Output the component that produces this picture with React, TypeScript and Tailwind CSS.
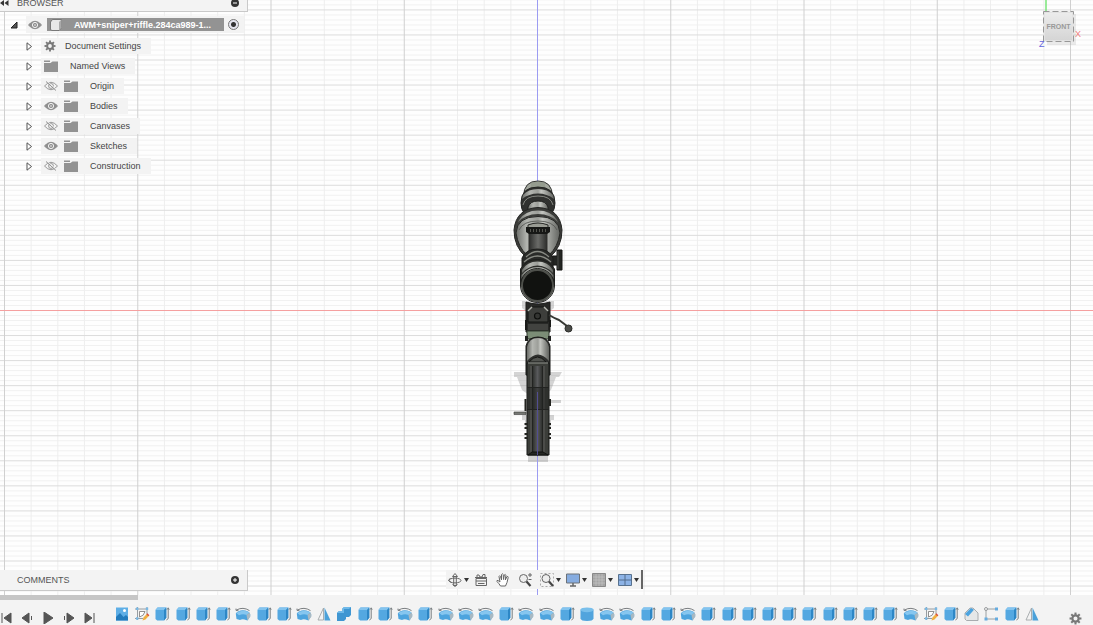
import React from 'react';
import clsx from 'clsx';

type Feature = 'image' | 'sketch' | 'extrude' | 'revolve' | 'mirror' | 'combine' | 'cylinder' | 'chamfer' | 'points';

interface TreeItem {
  label: string;
  icon: 'gear' | 'folder';
  visible?: boolean;
}

const treeItems: TreeItem[] = [
  { label: 'Document Settings', icon: 'gear' },
  { label: 'Named Views', icon: 'folder' },
  { label: 'Origin', icon: 'folder', visible: false },
  { label: 'Bodies', icon: 'folder', visible: true },
  { label: 'Canvases', icon: 'folder', visible: false },
  { label: 'Sketches', icon: 'folder', visible: true },
  { label: 'Construction', icon: 'folder', visible: false },
];

// e = extrude, r = revolve, m = mirror, j = combine, y = cylinder ...
const codes: Record<string, Feature> = {
  i: 'image',
  s: 'sketch',
  e: 'extrude',
  r: 'revolve',
  m: 'mirror',
  j: 'combine',
  y: 'cylinder',
  c: 'chamfer',
  p: 'points',
};

const timeline = 'iseeeereermjeererrrerreyrreereeeeeeeeeersecpem'.split('').map((c) => codes[c]);

const Gear = ({ size }: { size: number }) => (
  <svg width={size} height={size} viewBox="0 0 14 14" fill="none" stroke="#777">
    <circle cx="7" cy="7" r="3.4" strokeWidth="2.4" />
    {[0, 45, 90, 135, 180, 225, 270, 315].map((a) => (
      <path key={a} d="M7 0.6V3" strokeWidth="2.2" transform={`rotate(${a} 7 7)`} />
    ))}
  </svg>
);

const Folder = () => (
  <svg width="14" height="12" viewBox="0 0 14 12" fill="#929292">
    <path d="M0 0.5h6v1.5H0zM0 3h6.5l2-1.5H14V12H0z" />
  </svg>
);

const Eye = ({ open }: { open: boolean }) => (
  <svg width="14" height="10" viewBox="0 0 14 10" fill="none" stroke="#8f8f8f">
    {open ? (
      <>
        <path d="M0.5 5Q7-2.5 13.5 5Q7 12.5 0.5 5z" fill="#8f8f8f" />
        <circle cx="7" cy="5" r="2.6" fill="#8f8f8f" stroke="#f4f4f4" />
        <circle cx="7" cy="5" r="0.8" fill="#f4f4f4" stroke="none" />
      </>
    ) : (
      <>
        <path d="M0.5 5Q7-2.5 13.5 5Q7 12.5 0.5 5z" strokeWidth="0.9" />
        <circle cx="7" cy="5" r="2.4" strokeWidth="0.9" />
        <path d="M2 0.5L12 9.5" strokeWidth="1" />
        <path d="M3.5 0.5L13 9" stroke="#f2f2f2" strokeWidth="0.8" />
      </>
    )}
  </svg>
);

const FeatureIcon = ({ type }: { type: Feature }) => {
  switch (type) {
    case 'image':
      return (
        <>
          <path d="M2 1.5h12v13H2z" fill="#5daee6" />
          <path d="M2 11l4-4 3.5 4L12 9l2 2v3.5H2z" fill="#217bbd" />
          <circle cx="10.5" cy="4.5" r="1.5" fill="#fff" />
        </>
      );
    case 'sketch':
      return (
        <>
          <path d="M3.5 1v13M1 3h13M13 1v7M1 12.5h8" stroke="#8c9296" strokeWidth="0.9" fill="none" />
          <path d="M5.5 5.5h5.5Q10 10 5.5 11z" stroke="#777" strokeWidth="0.8" fill="#fff" />
          <path d="M2 1.5h2.4v2.4H2zM11.8 1.5h2.4v2.4h-2.4zM2 11.3h2.4v2.4H2z" fill="#79b8e4" />
          <path d="M8.5 14.5l1-3 3.5-3.8 2 2-3.5 3.8z" fill="#f0b040" />
          <path d="M12.4 8.2l1-1 2 2-1 1z" fill="#dc4c3c" />
        </>
      );
    case 'revolve':
      return (
        <>
          <path d="M0.8 7.5Q2 5.5 3.5 5.2Q8 3.4 13 5.5Q16 7.5 15 10.5L12.5 14.5L9.5 13.4Q7 12.7 5 14L1.5 13z" fill="#4da4de" />
          <path d="M1.2 7Q3.5 5 8 4.7Q12 4.8 14.5 6.6L11.5 9Q8 7.6 4 9.2z" fill="#86c6ef" />
          <path d="M12.5 14.5L15.3 10.5Q15.6 8 14.5 6.6L11.5 9z" fill="#a9b9c2" />
          <path d="M1.5 4Q8 0.4 14.5 4.6M1 2.6v1.8h2.4" fill="none" stroke="#6c7174" strokeWidth="0.9" />
        </>
      );
    case 'mirror':
      return (
        <>
          <path d="M7.5 2L2 14h5.5z" fill="#f3f3f3" stroke="#a2a6a8" strokeWidth="0.9" />
          <path d="M8.5 1.5L14.5 14.5h-6z" fill="#4ba1d9" />
        </>
      );
    case 'combine':
      return (
        <>
          <path d="M1 7l2-2h3V3l2-2h7v8l-2 2h-3v2l-2 2H1z" fill="#3f96d2" />
          <path d="M1 7l2-2h3V3l2-2h7l-2 2H8v4z" fill="#6fb9e9" />
        </>
      );
    case 'cylinder':
      return (
        <>
          <path d="M1.5 3.5v9Q2 15 8 15t6.5-2.5v-9z" fill="#51a4dd" />
          <ellipse cx="8" cy="3.8" rx="6.5" ry="2.4" fill="#79bfeb" />
        </>
      );
    case 'chamfer':
      return (
        <>
          <path d="M2 7l5-5h3l5 5v7.5H3.5L2 13z" fill="#e5e7e8" stroke="#a1a5a8" strokeWidth="0.9" />
          <path d="M2 8L8 2l3 1.8-6 6.7z" fill="#4ba3df" />
        </>
      );
    case 'points':
      return (
        <>
          <path d="M3 3h10M3 3v10h10" fill="none" stroke="#92979a" strokeWidth="0.9" />
          <path d="M12 1.5h3v3h-3zM1.5 11.5h3v3h-3zM12 11.5h3v3h-3z" fill="#66ace0" />
          <circle cx="3" cy="3" r="1.5" fill="#f3f3f3" stroke="#85898c" strokeWidth="0.8" />
        </>
      );
    default:
      return (
        <>
          <path d="M1.5 4l2-2.5h8.8v10.2L10 14.6H3.2L1.5 13z" fill="#54a8e1" />
          <path d="M1.5 4l2-2.5h8.8L10 4z" fill="#83c4ef" />
          <path d="M10 4l2.3-2.5v10.2L10 14.6z" fill="#2d87c6" />
          <path d="M14.2 3v9.6l-1.8 1.4M13 3.6l1.2-1.8 1 1.8" fill="none" stroke="#6a7074" strokeWidth="0.9" />
        </>
      );
  }
};

const Grid = () => {
  const rows = Array.from({ length: 119 }, (_, i) => i - 62);
  const cols = Array.from({ length: 42 }, (_, i) => i - 21);
  return (
    <g>
      {rows.filter((n) => n % 5 !== 0).map((n) => (
        <path key={n} d={`M0 ${310.5 + n * 5.01}H1093`} stroke="#f1f1f1" />
      ))}
      {cols.filter((n) => n % 5 !== 0).map((n) => (
        <path key={n} d={`M${537.5 + n * 26.65} 0V595`} stroke="#eeeeee" />
      ))}
      {rows.filter((n) => n % 5 === 0).map((n) => (
        <path key={n} d={`M0 ${310.5 + n * 5.01}H1093`} stroke="#dcdcdc" />
      ))}
      {cols.filter((n) => n % 5 === 0 && n !== 0).map((n) => (
        <path key={n} d={`M${537.5 + n * 26.65} 0V595`} stroke="#d0d0d0" />
      ))}
      <path d="M0 310.5H1093" stroke="#f5a0a0" />
      <path d="M537.5 0V595" stroke="#9c9cf2" />
    </g>
  );
};

const Model = () => (
  <g strokeLinejoin="round">
    <defs>
      <linearGradient id="metal">
        <stop offset="0" stopColor="#6a6c68" />
        <stop offset="0.25" stopColor="#b4b6b1" />
        <stop offset="0.5" stopColor="#9c9e99" />
        <stop offset="0.6" stopColor="#c4c6c1" />
        <stop offset="1" stopColor="#61635f" />
      </linearGradient>
      <linearGradient id="dark">
        <stop offset="0" stopColor="#2d2e2c" />
        <stop offset="0.5" stopColor="#6a6b68" />
        <stop offset="1" stopColor="#2c2d2b" />
      </linearGradient>
      <linearGradient id="stock">
        <stop offset="0" stopColor="#30322f" />
        <stop offset="0.5" stopColor="#595a5c" />
        <stop offset="1" stopColor="#30322f" />
      </linearGradient>
    </defs>

    {/* ground shadow */}
    <g fill="#777" opacity="0.3">
      <path d="M514 372h48l-3 5h-3l-5 13-8 5h-14l-7-5-5-13h-3z" />
      <path d="M522 301h32v7l-4 3h-24l-4-3z" />
      <path d="M549 400h12v3h-12zM522 415h32v5h-3v8h-26v-8h-3zM528 455h20v7h-20z" />
    </g>

    {/* front of the scope */}
    <path d="M523.5 196Q524 181 538 181T552.500 196z" fill="#a2a69d" stroke="#333432" />
    <path d="M531 183q7-3 14 0v7h-14z" fill="#8c9685" opacity="0.6" />
    <path d="M521 203Q521 187 538 187T555 203Q555 209 552 213H524Q521 209 521 203z" fill="#30312f" stroke="#242523" />
    <path d="M523 195Q528 189 538 189T553 195L554 199Q547 193.500 538 193.500T522 199z" fill="url(#metal)" />
    <path d="M523 205Q525 196 538 196T553 205" fill="none" stroke="#858781" strokeWidth="1" />
    <path d="M528 211v-4Q530 201 538 201t10 6v4z" fill="url(#metal)" stroke="#1f201e" />

    {/* bell */}
    <path d="M514 230Q516 208.5 538 207.5Q560 208.5 562 230Q562 247 550 257h-24Q514 247 514 230z" fill="#3b3c39" stroke="#242523" />
    <path d="M519 220Q525 210.5 538 210.5T557 220L558 222.500Q551 214 538 214T518 222.500z" fill="url(#metal)" />
    <path d="M516 233Q517 216.5 538 216.5T560 233Q558 247 549 255h-22Q518 247 516 233z" fill="url(#metal)" stroke="#262725" />
    <path d="M519 230Q523 221 538 221T557 230" fill="none" stroke="#51524e" strokeWidth="0.8" />
    <path d="M529 231h18v22h-18z" fill="url(#dark)" stroke="#30312e" />
    <path d="M528 225q10-4 20 0v3h-20z" fill="#9a9c94" stroke="#292a27" />
    <path d="M526 227h24v5l-3 2h-18l-3-2z" fill="#171816" />
    <path d="M530 230.5h16" stroke="#52534d" strokeWidth="3" strokeDasharray="1 2" />

    {/* side turret */}
    <path d="M550 256h7v-6h5v20h-5v-5h-7z" fill="#232522" stroke="#161715" />
    <path d="M558 251v18" stroke="#4b4c48" />

    {/* eyepiece */}
    <path d="M522 267v-9q4-9 15.500-9t15.500 9v9z" fill="#292a28" stroke="#1c1d1b" />
    <path d="M526 257q11.500-11 23 0M524 262q13.500-12 27 0" fill="none" stroke="#888a83" strokeWidth="1.2" />
    <path d="M520.5 286v-17Q526 259.500 537.500 259.500T554.500 269v17z" fill="#2b2c29" stroke="#1c1d1b" />
    <path d="M522 270Q527 261.500 537.500 261.500T553 270v3Q546 265.500 537.500 265.500T522 273z" fill="url(#metal)" />
    <path d="M521.5 275Q528 267 537.500 267T553.500 275v4Q547 270 537.500 270T521.500 279z" fill="url(#metal)" />
    <circle cx="537.5" cy="285.5" r="15.5" fill="#111210" stroke="#4d4f4a" strokeWidth="2" />
    <circle cx="537.5" cy="285.5" r="17" fill="none" stroke="#20211f" strokeWidth="1" />

    {/* receiver */}
    <path d="M526 302q12 4 24 0v30h-24z" fill="#282927" stroke="#1c1d1b" />
    <path d="M528 312l4-5h12l4 5v10h-20z" fill="#3d3e3b" stroke="#151614" />
    <path d="M528 311l4-4M544 307l4 4" stroke="#b9bbb4" strokeWidth="1.5" />
    <circle cx="537.5" cy="316" r="3" fill="#343532" stroke="#0e0f0d" strokeWidth="1.2" />
    <path d="M525 320h2v10h-2zM549 320h2v7h-2z" fill="#1a1b19" />
    <path d="M528 324h20v6h-20z" fill="#424340" />
    <path d="M549 315q5 3 10 5l8 6" fill="none" stroke="#373834" strokeWidth="2" />
    <circle cx="568.5" cy="328.5" r="3.5" fill="#4b4c49" stroke="#2c2d2a" />
    <path d="M527 331h22v8h-22z" fill="#7b8d76" stroke="#333d31" />

    {/* barrel and stock */}
    <path d="M526 375v-29q2-9 12-9t12 9v29z" fill="#2f302e" stroke="#181917" />
    <path d="M527 361v-14q2-9 11-9t11 9v14q-11-13-22 0z" fill="url(#metal)" />
    <path d="M525 336h3v5h-3zM548 336h3v5h-3z" fill="#20221f" />
    <path d="M529 362q8.500-10 17 0z" fill="#51534f" stroke="#151614" />
    <path d="M527 363h22v92h-22z" fill="#3b3d39" stroke="#171816" />
    <path d="M530 366h15v88h-15z" fill="#4b4c49" />
    <path d="M533 366h9v88h-9z" fill="url(#stock)" />
    <path d="M528 363h20" stroke="#a2a59e" />
    <path d="M527 387.5h22M527 409.5h22M532.5 366v88M542.5 366v88" stroke="#222321" />
    <path d="M528 388h20v21h-20z" fill="#20221f" opacity="0.45" />
    <path d="M528 455l4-3h11l5 3z" fill="#252723" stroke="#111210" />
    <path d="M514 412h12v2.500h-12z" fill="#767874" stroke="#393a37" strokeWidth="0.6" />
    <path d="M525.5 399v12M550 399v7M524.5 424h3M524.5 428h3M524.5 434h3M524.5 438h3M548 424h3M548 428h3M548 434h3M548 438h3" stroke="#22231f" strokeWidth="2" />
    <path d="M537.5 392v63" stroke="#524e92" />
    <path d="M537.5 457v138" stroke="#9c9cf2" />
  </g>
);

const Caret = () => (
  <svg width="5" height="4" viewBox="0 0 5 4" fill="#333">
    <path d="M0 0h5L2.5 4z" />
  </svg>
);

const ToolButton = ({ label, menu, children }: { label: string; menu?: boolean; children: React.ReactNode }) => (
  <button aria-label={label} className={clsx('flex h-4 items-center gap-[2px]', !menu && 'pr-[3px]')}>
    <svg width="14" height="14" viewBox="0 0 14 14" fill="none" stroke="#666" strokeWidth="1">
      {children}
    </svg>
    {menu && <Caret />}
  </button>
);

const ViewToolbar = () => (
  <div className="mb-[6px] flex h-[19px] items-center gap-[5px] border-r-2 border-[#666] bg-[#f3f3f3] px-[2px]">
    <ToolButton label="Orbit" menu>
      <ellipse cx="7" cy="7.5" rx="6" ry="2.4" />
      <path d="M5.7 3v9.5h2.6V3M4.5 3.5L7 0.5l2.5 3zM4.5 11.5L7 13.5l2.5-2M2.5 5L0.5 7.5l3 2" />
    </ToolButton>
    <ToolButton label="Look At">
      <path d="M2 5.5h10.5v7H2zM2 8h10.5M4 10.5h6.5M1 4.5h12M3 4V2h2l1 2h2l1-2.5h2V4" />
    </ToolButton>
    <ToolButton label="Pan">
      <path d="M4.5 13Q3 10.5 1 8.5q-.5-1.5 1-1l2 1.5L3 3.5q.5-1.5 1.5 0L5.5 7 5.5 1.5q1-1.5 1.7 0l.3 5 .8-4.5q1-1.3 1.6.2L9.3 7l1.6-3.3q1.4-.7 1.3.8L11 9.5 9.5 13z" fill="#fff" />
    </ToolButton>
    <ToolButton label="Zoom">
      <circle cx="5.5" cy="5.5" r="4" fill="#eee" />
      <path d="M8.5 8.5l4 4.5" stroke="#444" strokeWidth="2.2" />
      <path d="M10 2h4M12 0v4M10.5 6.5h3" />
    </ToolButton>
    <ToolButton label="Fit" menu>
      <path d="M0.5 0.5h13v13H0.500z" stroke="#aaa" strokeDasharray="2 2" />
      <circle cx="6" cy="5.5" r="4" fill="#eee" />
      <path d="M9 8.5l4 4.5" stroke="#444" strokeWidth="2.2" />
    </ToolButton>
    <ToolButton label="Display Settings" menu>
      <path d="M0.5 1h13v9H0.500z" fill="#86ace0" stroke="#6c7278" />
      <path d="M7 10v3M4 13h6" strokeWidth="1.5" />
    </ToolButton>
    <ToolButton label="Grid and Snaps" menu>
      <path d="M0.5 0.5h13v13H0.500z" fill="#a4a4a4" stroke="#888" />
      <path d="M4 1v12M7 1v12M10 1v12M1 4h12M1 7h12M1 10h12" stroke="#c4c4c4" strokeWidth="0.7" />
    </ToolButton>
    <ToolButton label="Viewports" menu>
      <path d="M0.5 1.5h13v11H0.500z" fill="#8db3e6" stroke="#58728f" />
      <path d="M7 1.5v11M0.5 7h13" stroke="#536d8c" />
    </ToolButton>
  </div>
);

const BrowserPanel = () => (
  <section className="w-[248px]">
    <header className="-mt-[6px] flex h-[18px] items-center justify-between border-r border-b border-[#c9c9c9] bg-[#f3f3f3] pr-2 text-[#555]">
      <div className="flex items-center gap-2">
        <button aria-label="Collapse browser">
          <svg width="9" height="6" viewBox="0 0 9 6" fill="#333">
            <path d="M4 0v6L0 3zM8.5 0v6L4.500 3z" />
          </svg>
        </button>
        <h2>BROWSER</h2>
      </div>
      <button aria-label="Minimize browser">
        <svg width="8" height="8" viewBox="0 0 8 8">
          <circle cx="4" cy="4" r="4" fill="#333" />
          <path d="M2 4h4" stroke="#fff" />
        </svg>
      </button>
    </header>

    <div className="mt-1 flex h-[17px] items-center pr-1 pl-[10px]">
      <button aria-label="Collapse document" className="w-4">
        <svg width="8" height="8" viewBox="0 0 8 8">
          <path d="M7 1v6H1z" fill="#555" stroke="#222" />
        </svg>
      </button>
      <div className="flex h-full flex-1 items-center bg-[#f3f3f3] pl-[2px]">
        <button aria-label="Toggle document" className="w-[19px]">
          <Eye open />
        </button>
        <div className="flex h-[13px] w-[177px] items-center gap-3 bg-[#939393] pl-[3px] font-bold text-white">
          <svg width="12" height="12" viewBox="0 0 12 12">
            <path d="M0.5 3l2-2.5h9v8l-2.5 3H2l-1.5-1z" fill="#e8e8e8" stroke="#666" strokeWidth="0.8" />
            <path d="M9 3l2.5-2.5v8L9 11.500z" fill="#aaa" />
          </svg>
          <label htmlFor="active-document" className="whitespace-nowrap">
            AWM+sniper+riffle.284ca989-1...
          </label>
        </div>
        <input
          id="active-document"
          type="radio"
          defaultChecked
          className="ml-1 size-[11px] appearance-none rounded-full border border-[#777] bg-[radial-gradient(circle,#333_2px,#e4e4ee_3px)]"
        />
      </div>
    </div>

    <ul className="mt-[3px]">
      {treeItems.map((item) => (
        <li key={item.label} className="flex h-5 items-center pl-[26px]">
          <button aria-label={`Expand ${item.label}`} className="w-[15px]">
            <svg width="7" height="9" viewBox="0 0 7 9" fill="#fff" stroke="#555">
              <path d="M1 0.8l4.5 3.7L1 8.200z" />
            </svg>
          </button>
          <div className="flex h-4 items-center bg-[#f3f3f3] pr-[10px] pl-[3px]">
            {item.visible !== undefined && (
              <button aria-label={`Toggle ${item.label}`} className="w-5">
                <Eye open={item.visible} />
              </button>
            )}
            {item.icon === 'gear' ? <Gear size={12} /> : <Folder />}
            <span className={clsx('whitespace-nowrap', item.icon === 'gear' ? 'ml-[9px]' : 'ml-3')}>{item.label}</span>
          </div>
        </li>
      ))}
    </ul>
  </section>
);

const ViewCube = () => (
  <div className="absolute top-0 right-0 h-14 w-[54px]">
    <svg className="absolute inset-0" width="54" height="56" viewBox="0 0 54 56">
      <path d="M7 0v11" stroke="#79e579" strokeWidth="1.5" />
      <path d="M8 14h29v31H8z" fill="#999" opacity="0.2" />
      <path d="M4.5 11.5h30v30h-30z" fill="#e2e2e2" stroke="#989898" strokeDasharray="6 3" />
    </svg>
    <button className="absolute top-[13px] left-[6px] h-[27px] w-[27px] bg-linear-to-b from-[#ececec] to-[#d5d5d5] text-center text-[7px] font-bold text-[#999]">
      FRONT
    </button>
    <span className="absolute top-7 right-3 text-[#f08080]">X</span>
    <span className="absolute top-[38px] left-0 text-[#6565dd]">Z</span>
  </div>
);

const Playback = () => (
  <div className="flex w-[114px] shrink-0 items-center gap-[9px] pt-4">
    {[
      { label: 'Go to start', d: 'M2 1v10M11 1v10L4 6z' },
      { label: 'Step back', d: 'M8 1v10L1 6zM10.5 4v4' },
      { label: 'Play', d: 'M2 0v12L11 6z' },
      { label: 'Step forward', d: 'M4 1v10L11 6zM1.5 4v4' },
      { label: 'Go to end', d: 'M1 1v10L8 6zM10 1v10' },
    ].map((b) => (
      <button key={b.label} aria-label={b.label}>
        <svg width="12" height="12" viewBox="0 0 12 12" fill="#555" stroke="#555">
          <path d={b.d} />
        </svg>
      </button>
    ))}
  </div>
);

const App: React.FC = () => {
  return (
    <div className="flex h-screen flex-col overflow-hidden bg-[#fefefe] font-['Liberation_Sans',Arial,sans-serif] text-[9px] leading-3 text-[#444]">
      <main className="relative flex min-h-0 flex-1 flex-col justify-between">
        <svg className="absolute inset-0 h-full w-full" viewBox="0 0 1093 595" preserveAspectRatio="xMidYMid slice">
          <Grid />
          <Model />
        </svg>

        <div className="relative">
          <BrowserPanel />
        </div>
        <ViewCube />

        <div className="relative grid grid-cols-[1fr_auto_1fr] items-end">
          <section className="mb-1 flex h-[21px] w-[248px] items-center justify-between border-r border-b border-[#c9c9c9] bg-[#f3f3f3] pr-2 pl-[17px] text-[#555]">
            <h2>COMMENTS</h2>
            <button aria-label="Add comment">
              <svg width="8" height="8" viewBox="0 0 8 8">
                <circle cx="4" cy="4" r="4" fill="#333" />
                <path d="M2 4h4M4 2v4" stroke="#fff" />
              </svg>
            </button>
          </section>
          <div className="pr-1">
            <ViewToolbar />
          </div>
        </div>
      </main>

      <footer className="relative flex h-[30px] bg-[#f3f3f3]">
        <div className="absolute top-0 left-0 h-[5px] w-[138px] bg-[#c6c6c6]" />
        <Playback />
        <div className="flex min-w-0 flex-1 items-end justify-between pb-[3px]">
          {timeline.map((type, i) => (
            <button key={i} aria-label={type}>
              <svg width="16" height="16" viewBox="0 0 16 16">
                <FeatureIcon type={type} />
              </svg>
            </button>
          ))}
        </div>
        <button aria-label="Timeline settings" className="flex w-[53px] shrink-0 items-end justify-end pr-[11px]">
          <Gear size={13} />
        </button>
      </footer>
    </div>
  );
};

export default App;
